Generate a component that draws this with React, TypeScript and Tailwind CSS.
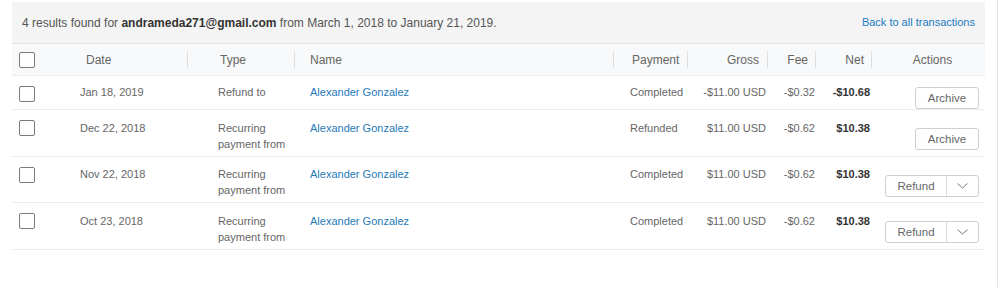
import React from 'react';

interface Txn {
  date: string;
  type: string[];
  name: string;
  payment: string;
  gross: string;
  fee: string;
  net: string;
  action: 'archive' | 'refund';
  rowClass: string;
  padClass: string;
  btnClass: string;
}

const txns: Txn[] = [
  { date: 'Jan 18, 2019', type: ['Refund to'], name: 'Alexander Gonzalez', payment: 'Completed', gross: '-$11.00 USD', fee: '-$0.32', net: '-$10.68', action: 'archive', rowClass: 'h-[34px]', padClass: 'pt-[8px]', btnClass: 'mt-[11px]' },
  { date: 'Dec 22, 2018', type: ['Recurring', 'payment from'], name: 'Alexander Gonzalez', payment: 'Refunded', gross: '$11.00 USD', fee: '-$0.62', net: '$10.38', action: 'archive', rowClass: 'h-[47px]', padClass: 'pt-[10px]', btnClass: 'mt-[18px]' },
  { date: 'Nov 22, 2018', type: ['Recurring', 'payment from'], name: 'Alexander Gonzalez', payment: 'Completed', gross: '$11.00 USD', fee: '-$0.62', net: '$10.38', action: 'refund', rowClass: 'h-[46px]', padClass: 'pt-[9px]', btnClass: 'mt-[18px]' },
  { date: 'Oct 23, 2018', type: ['Recurring', 'payment from'], name: 'Alexander Gonzalez', payment: 'Completed', gross: '$11.00 USD', fee: '-$0.62', net: '$10.38', action: 'refund', rowClass: 'h-[47px]', padClass: 'pt-[10px]', btnClass: 'mt-[18px]' },
];

// column widths follow the separators in the header
const cols = 'grid grid-cols-[43px_133px_107px_319px_74px_80px_48px_56px_113px]';

function Checkbox({ className = '' }: { className?: string }) {
  return <div className={`h-4 w-4 rounded-[2px] border border-[#7a7a7a] bg-white ${className}`} />;
}

function HeadCell({ children, className = '', sep = true }: { children: React.ReactNode; className?: string; sep?: boolean }) {
  return (
    <div className="flex items-center">
      <div className={`flex-1 ${className}`}>{children}</div>
      {sep && <div className="h-[17px] w-px bg-[#dedede]" />}
    </div>
  );
}

export default function App() {
  return (
    <div className="flex h-[287px] w-[1000px] bg-white pl-[12px] font-['Liberation_Sans',Arial,sans-serif] text-[11px] text-[#666]">
      <div className="w-[973px] pt-[2px]">
        {/* summary banner */}
        <div className="flex h-[42px] items-center justify-between border-b border-[#e3e3e3] bg-[#f4f4f4] pl-[10px] pr-[10px] text-[12px] text-[#555]">
          <span>
            4 results found for <b className="text-[#333]">andrameda271@gmail.com</b> from March 1, 2018 to January 21, 2019.
          </span>
          <a className="text-[11px] text-[#1c7bc0]">Back to all transactions</a>
        </div>

        {/* header */}
        <div className={`${cols} h-[32px] border-b border-[#ececec] bg-[#f8f9fa] text-[12px] text-[#666]`}>
          <div className="flex items-center pl-[7px]">
            <Checkbox />
          </div>
          <HeadCell className="pl-[31px]">Date</HeadCell>
          <HeadCell className="pl-[32px]">Type</HeadCell>
          <HeadCell className="pl-[15px]">Name</HeadCell>
          <HeadCell className="pl-[18px]">Payment</HeadCell>
          <HeadCell className="pr-[8px] text-right">Gross</HeadCell>
          <HeadCell className="pr-[7px] text-right">Fee</HeadCell>
          <HeadCell className="pr-[7px] text-right">Net</HeadCell>
          <HeadCell className="pl-[8px] text-center" sep={false}>Actions</HeadCell>
        </div>

        {/* rows */}
        {txns.map((t, i) => (
          <div key={i} className={`${cols} ${t.rowClass} border-b border-[#ececec] leading-4`}>
            <div className="pl-[7px] pt-[10px]">
              <Checkbox />
            </div>
            <div className={`pl-[25px] ${t.padClass}`}>{t.date}</div>
            <div className={`pl-[30px] ${t.padClass}`}>
              {t.type.map((l) => (
                <div key={l}>{l}</div>
              ))}
            </div>
            <div className={`pl-[15px] ${t.padClass} text-[#1f7ab8]`}>{t.name}</div>
            <div className={`pl-[16px] ${t.padClass}`}>{t.payment}</div>
            <div className={`pr-[2px] ${t.padClass} text-right`}>{t.gross}</div>
            <div className={`pr-[1px] ${t.padClass} text-right`}>{t.fee}</div>
            <div className={`pr-[2px] ${t.padClass} text-right font-bold text-[#333]`}>{t.net}</div>
            <div className="flex justify-end pr-[6px]">
              {t.action === 'archive' ? (
                <div className={`${t.btnClass} flex h-[22px] w-[64px] items-center justify-center rounded-[3px] border border-[#cfcfcf] bg-white text-[11.5px] text-[#666]`}>
                  Archive
                </div>
              ) : (
                <div className={`${t.btnClass} flex h-[22px] w-[94px] rounded-[3px] border border-[#cfcfcf] bg-white text-[11.5px] text-[#666]`}>
                  <div className="flex flex-1 items-center justify-center border-r border-[#dcdcdc]">Refund</div>
                  <div className="flex w-[31px] items-center justify-center">
                    <svg width="11" height="6" viewBox="0 0 11 6" fill="none">
                      <path d="M0.5 0.5L5.5 5L10.5 0.5" stroke="#777" strokeWidth="1" />
                    </svg>
                  </div>
                </div>
              )}
            </div>
          </div>
        ))}
      </div>
      <div className="ml-[12px] w-px bg-[#e4e4e4]" />
    </div>
  );
}
